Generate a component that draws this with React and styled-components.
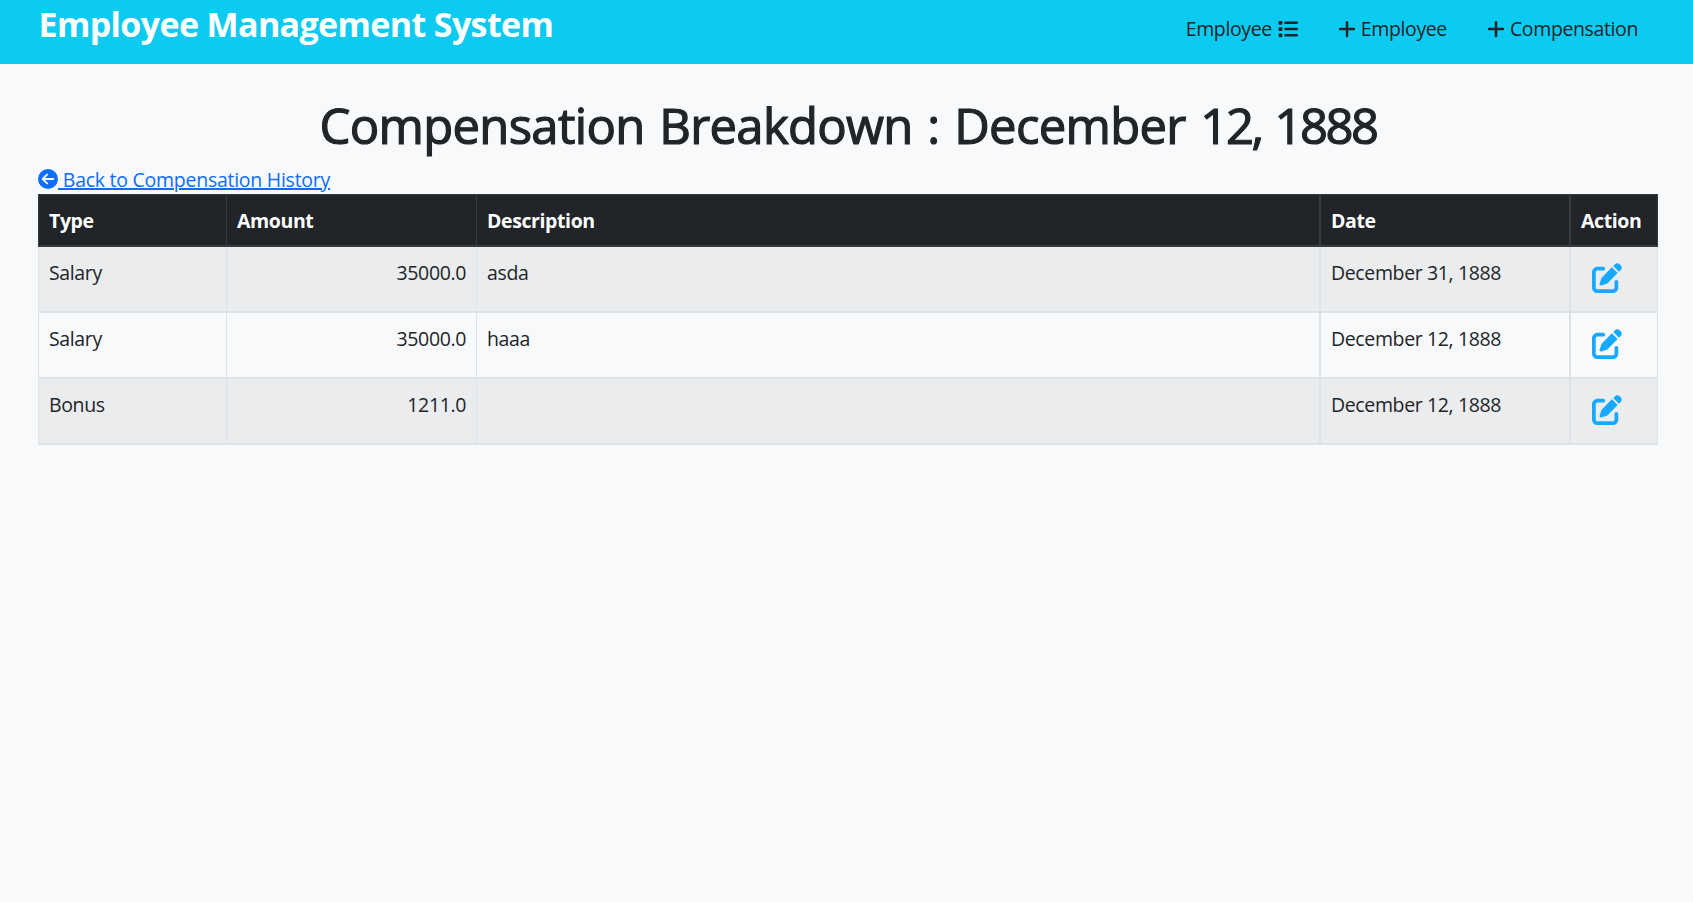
import React from "react";
import styled, { createGlobalStyle } from "styled-components";
import { FaPlus, FaList, FaCircleArrowLeft, FaPenToSquare } from "react-icons/fa6";

const GlobalStyle = createGlobalStyle`
  *, *::before, *::after { box-sizing: border-box; }
  body {
    margin: 0;
    min-height: 100vh;
    background: #f8f9fb;
    color: #212529;
    font-family: "Open Sans", "Noto Sans", sans-serif;
    font-size: 19.5px;
    font-weight: 400;
    line-height: 30px;
  }
`;

const Header = styled.header`
  display: flex;
  justify-content: space-between;
  height: 64px;
  padding: 0 55px 0 38px;
  background: #0dcaf0;
`;

const Brand = styled.h1`
  margin: 3px 0 0 0.5px;
  color: #fff;
  font-size: 34px;
  font-weight: 700;
  line-height: 42px;
  letter-spacing: -0.63px;
  white-space: nowrap;
`;

const Nav = styled.nav`
  display: flex;
  gap: 39px;
  padding-top: 14px;
`;

const NavLink = styled.a`
  display: flex;
  align-items: center;
  gap: ${(p) => p.$gap || 4}px;
  height: 30px;
  color: #212529;
  letter-spacing: -0.38px;
  white-space: nowrap;
  svg { flex: none; }
`;

const Main = styled.main`
  padding: 31px 35px 0 38px;
`;

const PageTitle = styled.h2`
  margin: 0;
  text-align: center;
  font-size: 49px;
  font-weight: 500;
  line-height: 60px;
  letter-spacing: -0.68px;
  word-spacing: 2.6px;
  -webkit-text-stroke: 1.2px currentColor;
  white-space: nowrap;
`;

const TitleDigits = styled.span`
  letter-spacing: -2.5px;
`;

const BackLink = styled.a`
  display: flex;
  align-items: center;
  height: 30px;
  margin-top: 9px;
  color: #0d6efd;
  svg { flex: none; }
`;

const BackText = styled.span`
  padding-top: 2px;
  white-space: pre;
  letter-spacing: -0.26px;
  text-decoration: underline;
  text-decoration-thickness: 2px;
  text-underline-offset: 1px;
  text-decoration-skip-ink: auto;
`;

const Table = styled.table`
  width: 1620px;
  table-layout: fixed;
  border-collapse: separate;
  border-spacing: 0;
`;

const Col = styled.col`
  width: ${(p) => p.$w}px;
`;

const HeadCell = styled.th`
  height: 53px;
  padding: 2px 10px 0;
  background: #212529;
  color: #fff;
  font-weight: 700;
  text-align: left;
  letter-spacing: -0.4px;
  border: 0 solid #373b3e;
  border-width: 1px 1px 2px 0;
  &:first-child { border-left-width: 1px; }
  &:nth-child(3), &:nth-child(4) { border-right-width: 2px; }
`;

const Row = styled.tr`
  background: ${(p) => (p.$striped ? "#ebecee" : "#f8f9fb")};
`;

const Cell = styled.td`
  height: 66px;
  padding: 11px 10px 0;
  vertical-align: top;
  text-align: ${(p) => p.$align || "left"};
  letter-spacing: -0.37px;
  white-space: nowrap;
  border: 0 solid #dee2e6;
  border-width: 0 1px 2px 0;
  &:first-child { border-left-width: 1px; }
  &:nth-child(3), &:nth-child(4) { border-right-width: 2px; }
`;

const EditButton = styled.a`
  display: block;
  width: 30px;
  height: 30px;
  margin: 5px 0 0 11px;
  color: #17a9ff;
  svg { display: block; }
`;

const columns = [
  { label: "Type", width: 189 },
  { label: "Amount", width: 250 },
  { label: "Description", width: 844 },
  { label: "Date", width: 250 },
  { label: "Action", width: 87 },
];

const entries = [
  { type: "Salary", amount: "35000.0", description: "asda", date: "December 31, 1888" },
  { type: "Salary", amount: "35000.0", description: "haaa", date: "December 12, 1888" },
  { type: "Bonus", amount: "1211.0", description: "", date: "December 12, 1888" },
];

export default function App() {
  return (
    <>
      <GlobalStyle />
      <Header>
        <Brand>Employee Management System</Brand>
        <Nav>
          <NavLink $gap={6}>Employee<FaList size={20} /></NavLink>
          <NavLink><FaPlus size={20} />Employee</NavLink>
          <NavLink><FaPlus size={20} />Compensation</NavLink>
        </Nav>
      </Header>
      <Main>
        <PageTitle>
          Compensation Breakdown : December <TitleDigits>12, 1888</TitleDigits>
        </PageTitle>
        <BackLink>
          <FaCircleArrowLeft size={20} />
          <BackText> Back to Compensation History</BackText>
        </BackLink>
        <Table>
          <colgroup>
            {columns.map((c) => <Col key={c.label} $w={c.width} />)}
          </colgroup>
          <thead>
            <tr>{columns.map((c) => <HeadCell key={c.label}>{c.label}</HeadCell>)}</tr>
          </thead>
          <tbody>
            {entries.map((e, i) => (
              <Row key={i} $striped={i % 2 === 0}>
                <Cell>{e.type}</Cell>
                <Cell $align="right">{e.amount}</Cell>
                <Cell>{e.description}</Cell>
                <Cell>{e.date}</Cell>
                <Cell><EditButton><FaPenToSquare size={30} /></EditButton></Cell>
              </Row>
            ))}
          </tbody>
        </Table>
      </Main>
    </>
  );
}
